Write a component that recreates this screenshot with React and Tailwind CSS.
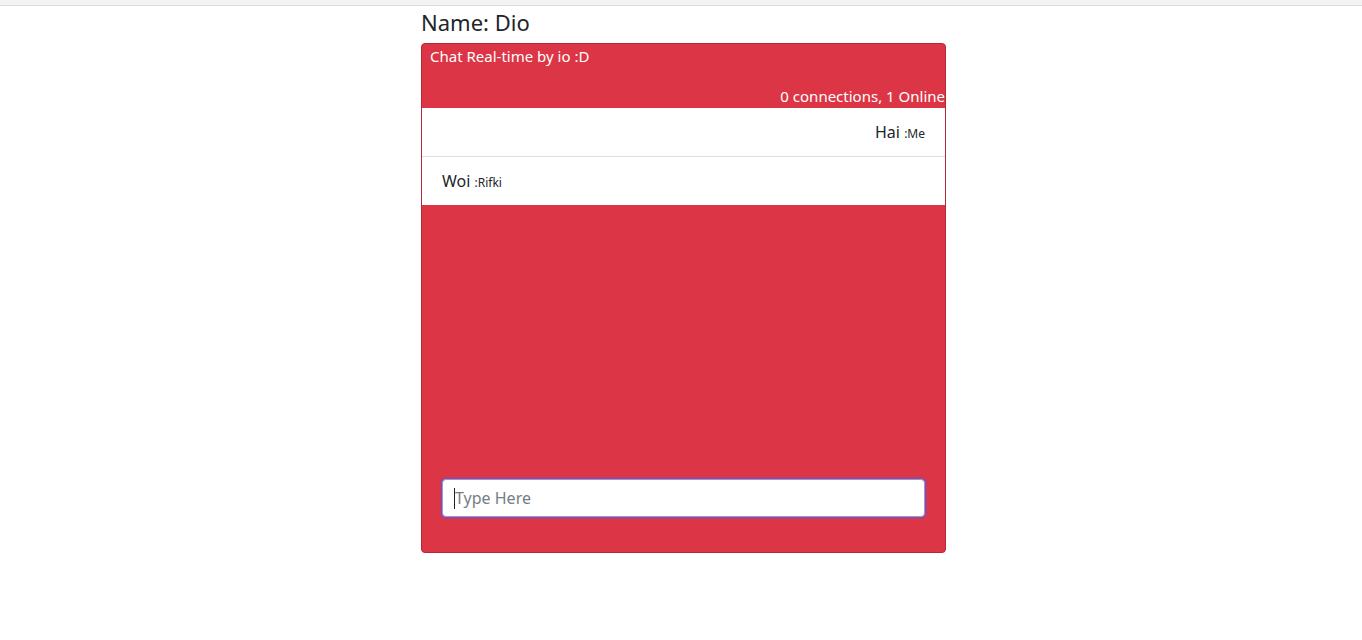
export default function App() {
  return (
    <div className="min-h-screen bg-white font-['Noto_Sans',sans-serif] text-[#212529]">
      {/* browser strip */}
      <div className="h-[6px] bg-[#f3f3f3] border-b border-[#dcdcdc]" />

      <div className="w-[525px] ml-[421px]">
        <h4 className="text-[22px] leading-[32px] mb-[5px]">Name: Dio</h4>

        <div className="h-[510px] flex flex-col bg-[#dc3545] border border-[#b5283a] rounded-[4px] overflow-hidden">
          <div className="h-[64px] flex flex-col text-white text-[15px]">
            <div className="pl-[8px] pt-[1px] leading-[22px]">Chat Real-time by io :D</div>
            <div className="mt-auto text-right leading-[22px] pb-[1px]">0 connections, 1 Online</div>
          </div>

          <ul className="bg-white">
            <li className="h-[49px] flex items-center justify-end pr-[20px] border-b border-[#dfdfdf] text-[16px]">
              <div>
                Hai <span className="text-[12px]">:Me</span>
              </div>
            </li>
            <li className="h-[48px] flex items-center pl-[20px] text-[16px]">
              <div>
                Woi <span className="text-[12px]">:Rifki</span>
              </div>
            </li>
          </ul>

          <div className="flex-1" />

          <div className="px-[20px] pb-[35px]">
            <div className="relative">
              <input
                placeholder="Type Here"
                className="w-full h-[38px] rounded-[4px] bg-white border border-[#8a9ee0] shadow-[0_0_0_2px_rgba(110,80,200,0.45)] px-[12px] text-[16px] placeholder:text-[#757d85] outline-none"
              />
              <span className="absolute left-[12px] top-[9px] w-px h-[21px] bg-[#222]" />
            </div>
          </div>
        </div>
      </div>
    </div>
  );
}
